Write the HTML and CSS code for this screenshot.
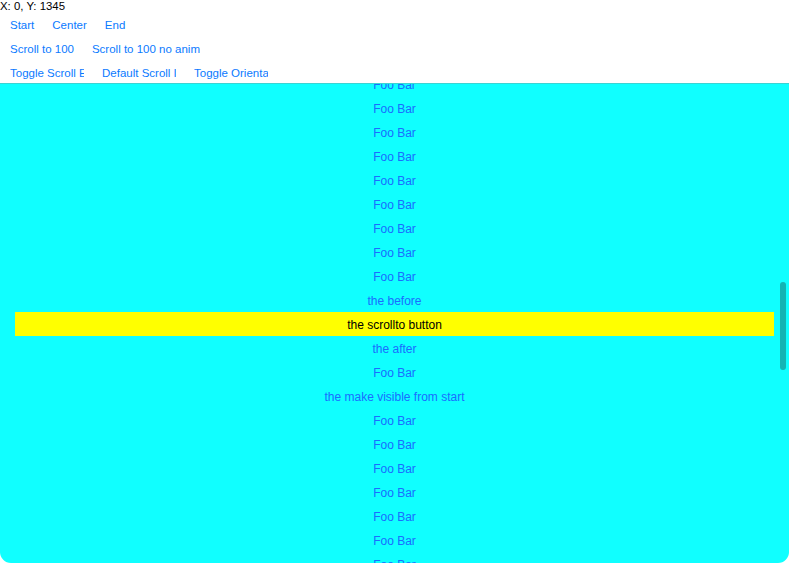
FILE: index.html
```html
<!DOCTYPE html>
<html>
<head>
<meta charset="utf-8">
<link rel="stylesheet" href="styles.css">
</head>
<body>
<div class="app">
  <div class="status">X: 0, Y: 1345</div>
  <div class="row">
    <span class="btn">Start</span>
    <span class="btn">Center</span>
    <span class="btn">End</span>
  </div>
  <div class="row">
    <span class="btn">Scroll to 100</span>
    <span class="btn">Scroll to 100 no anim</span>
  </div>
  <div class="row">
    <span class="btn fixed"><span class="clip">Toggle Scroll Enabled</span></span>
    <span class="btn fixed"><span class="clip">Default Scroll Indicator</span></span>
    <span class="btn fixed"><span class="clip">Toggle Orientation</span></span>
  </div>
  <div class="scroller">
    <div class="list">
      <div class="item">Foo Bar</div>
      <div class="item">Foo Bar</div>
      <div class="item">Foo Bar</div>
      <div class="item">Foo Bar</div>
      <div class="item">Foo Bar</div>
      <div class="item">Foo Bar</div>
      <div class="item">Foo Bar</div>
      <div class="item">Foo Bar</div>
      <div class="item">Foo Bar</div>
      <div class="item">the before</div>
      <div class="item target">the scrollto button</div>
      <div class="item">the after</div>
      <div class="item">Foo Bar</div>
      <div class="item">the make visible from start</div>
      <div class="item">Foo Bar</div>
      <div class="item">Foo Bar</div>
      <div class="item">Foo Bar</div>
      <div class="item">Foo Bar</div>
      <div class="item">Foo Bar</div>
      <div class="item">Foo Bar</div>
      <div class="item">Foo Bar</div>
      <div class="item">Foo Bar</div>
    </div>
    <div class="thumb"></div>
  </div>
</div>
</body>
</html>
```

FILE: styles.css
```css
html, body {
  margin: 0;
  padding: 0;
  background: #ffffff;
  height: 100%;
  overflow: hidden;
}
.app {
  display: flex;
  flex-direction: column;
  height: 563px;
  font-family: "Liberation Sans", Arial, sans-serif;
}
.status {
  font-size: 11.4px;
  line-height: 11px;
  height: 11px;
  padding-top: 1px;
  box-sizing: border-box;
  color: #000;
}
.row {
  display: flex;
  box-sizing: border-box;
  height: 24px;
  padding-top: 4px;
  align-items: center;
  padding-left: 1px;
}
.btn {
  font-size: 11.5px;
  color: #0a7aff;
  padding: 0 9px;
  white-space: nowrap;
}
.btn.fixed {
  display: block;
}
.clip {
  display: block;
  width: 74px;
  overflow: hidden;
  white-space: nowrap;
}
.scroller {
  position: relative;
  flex: 1;
  background: #10ffff;
  border-top: 1px solid #3ad3d3;
  border-radius: 0 0 11px 11px;
  overflow: hidden;
}
.list {
  display: flex;
  flex-direction: column;
  margin-top: -12px;
}
.item {
  box-sizing: border-box;
  height: 24px;
  padding-top: 3px;
  line-height: 21px;
  text-align: center;
  font-size: 12px;
  color: #1a6dff;
}
.item.target {
  background: #ffff00;
  color: #000;
  margin: 0 15px;
}
.thumb {
  position: absolute;
  right: 3px;
  top: 198px;
  width: 6px;
  height: 88px;
  border-radius: 3px;
  background: #14b4b4;
}
```
